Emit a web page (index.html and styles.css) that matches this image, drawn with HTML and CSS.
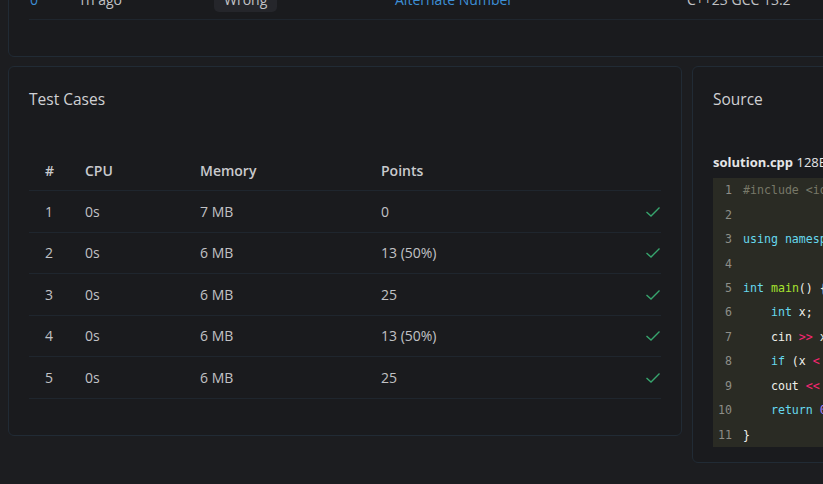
FILE: index.html
```html
<!DOCTYPE html>
<html lang="en">
<head>
<meta charset="utf-8">
<title>Submission</title>
<link rel="stylesheet" href="styles.css">
</head>
<body>
<div class="page">
  <section class="card top-card">
    <div class="sub-row">
      <span class="sub-id">0</span>
      <span class="sub-time">1h ago</span>
      <span class="sub-status"><span class="badge">Wrong</span></span>
      <span class="sub-problem">Alternate Number</span>
      <span class="sub-lang">C++23 GCC 13.2</span>
    </div>
  </section>

  <div class="main">
    <section class="card tests">
      <h2 class="card-title">Test Cases</h2>
      <div class="table">
        <div class="tr th">
          <span>#</span><span>CPU</span><span>Memory</span><span>Points</span><span></span>
        </div>
        <div class="tr">
          <span>1</span><span>0s</span><span>7 MB</span><span>0</span>
          <span class="ok"><svg viewBox="0 0 16 12" width="16" height="12"><polyline points="1.5,6 6,10 14.5,1.5" fill="none" stroke="currentColor" stroke-width="1.4"/></svg></span>
        </div>
        <div class="tr">
          <span>2</span><span>0s</span><span>6 MB</span><span>13 (50%)</span>
          <span class="ok"><svg viewBox="0 0 16 12" width="16" height="12"><polyline points="1.5,6 6,10 14.5,1.5" fill="none" stroke="currentColor" stroke-width="1.4"/></svg></span>
        </div>
        <div class="tr">
          <span>3</span><span>0s</span><span>6 MB</span><span>25</span>
          <span class="ok"><svg viewBox="0 0 16 12" width="16" height="12"><polyline points="1.5,6 6,10 14.5,1.5" fill="none" stroke="currentColor" stroke-width="1.4"/></svg></span>
        </div>
        <div class="tr">
          <span>4</span><span>0s</span><span>6 MB</span><span>13 (50%)</span>
          <span class="ok"><svg viewBox="0 0 16 12" width="16" height="12"><polyline points="1.5,6 6,10 14.5,1.5" fill="none" stroke="currentColor" stroke-width="1.4"/></svg></span>
        </div>
        <div class="tr">
          <span>5</span><span>0s</span><span>6 MB</span><span>25</span>
          <span class="ok"><svg viewBox="0 0 16 12" width="16" height="12"><polyline points="1.5,6 6,10 14.5,1.5" fill="none" stroke="currentColor" stroke-width="1.4"/></svg></span>
        </div>
      </div>
    </section>

    <section class="card source">
      <h2 class="card-title">Source</h2>
      <div class="file"><b>solution.cpp</b> 128B</div>
      <div class="code">
        <div class="ln"><span class="num">1</span><span class="src"><span class="c">#include &lt;iostream&gt;</span></span></div>
        <div class="ln"><span class="num">2</span><span class="src"></span></div>
        <div class="ln"><span class="num">3</span><span class="src"><span class="k">using</span> <span class="k">namespace</span> std;</span></div>
        <div class="ln"><span class="num">4</span><span class="src"></span></div>
        <div class="ln"><span class="num">5</span><span class="src"><span class="k">int</span> <span class="f">main</span>() {</span></div>
        <div class="ln"><span class="num">6</span><span class="src">    <span class="k">int</span> x;</span></div>
        <div class="ln"><span class="num">7</span><span class="src">    cin <span class="o">&gt;&gt;</span> x;</span></div>
        <div class="ln"><span class="num">8</span><span class="src">    <span class="k">if</span> (x <span class="o">&lt;</span> <span class="n">0</span>) x = <span class="o">-</span>x;</span></div>
        <div class="ln"><span class="num">9</span><span class="src">    cout <span class="o">&lt;&lt;</span> x <span class="o">&lt;&lt;</span> endl;</span></div>
        <div class="ln"><span class="num">10</span><span class="src">    <span class="k">return</span> <span class="n">0</span>;</span></div>
        <div class="ln"><span class="num">11</span><span class="src">}</span></div>
      </div>
    </section>
  </div>
</div>
</body>
</html>
```

FILE: styles.css
```css
html, body {
  margin: 0;
  padding: 0;
}
body {
  background: #1c1d20;
  color: #c1c2c5;
  font-family: "Open Sans", "Noto Sans", sans-serif;
  font-size: 14px;
  overflow: hidden;
  height: 484px;
}
.page {
  width: 1100px;
  padding: 0 8px;
  margin-top: -31px;
  display: flex;
  flex-direction: column;
  gap: 9px;
}
.card {
  background: #1a1b1e;
  border: 1px solid #212b35;
  border-radius: 6px;
  box-sizing: border-box;
}
.top-card {
  padding: 10px 20px 36px;
}
.sub-row {
  display: grid;
  grid-template-columns: 48px 136px 181px 292px auto;
  align-items: center;
  height: 40px;
  box-sizing: border-box;
  padding-left: 1px;
  border-bottom: 1px solid #1f262e;
}
.sub-id { color: #3d8fd6; }
.sub-problem { color: #3d8fd6; }
.badge {
  display: inline-flex;
  align-items: center;
  height: 24px;
  padding: 0 10px;
  border-radius: 5px;
  background: #25262b;
  color: #c1c2c5;
}
.main {
  display: grid;
  grid-template-columns: 674px 1fr;
  gap: 10px;
  align-items: start;
}
.card-title {
  margin: 0;
  font-size: 15.5px;
  font-weight: 400;
  line-height: 24px;
  color: #d0d1d4;
}
.tests {
  padding: 20px 20px 20px;
}
.table {
  margin-top: 39px;
  margin-bottom: 16px;
}
.tr {
  display: grid;
  grid-template-columns: 40px 115px 181px 1fr 40px;
  align-items: center;
  height: 41.5px;
  box-sizing: border-box;
  border-bottom: 1px solid #1f262e;
}
.tr > span:not(.ok) {
  padding-left: 16px;
}
.th {
  height: 41px;
  font-weight: 600;
  color: #c9cacd;
}
.ok {
  display: flex;
  justify-content: flex-end;
  color: #37a56e;
}
.ok svg {
  display: block;
  margin-top: 1px;
}
.source {
  padding: 20px 20px 15px;
}
.file {
  margin-top: 41px;
  margin-bottom: 6px;
  line-height: 20px;
  font-size: 13px;
  color: #e4e5e7;
}
.file b {
  font-weight: 700;
}
.code {
  background: #2a2b24;
  font-family: "DejaVu Sans Mono", monospace;
  font-size: 11.6px;
  color: #f0f0ea;
}
.ln {
  display: flex;
  height: 24.45px;
  align-items: center;
  white-space: pre;
}
.num {
  width: 19px;
  text-align: right;
  color: #8d8e88;
  flex: none;
}
.src {
  margin-left: 11px;
}
.c { color: #777868; }
.k { color: #66d9ef; }
.f { color: #a6e22e; }
.o { color: #f92672; }
.n { color: #ae81ff; }
```
